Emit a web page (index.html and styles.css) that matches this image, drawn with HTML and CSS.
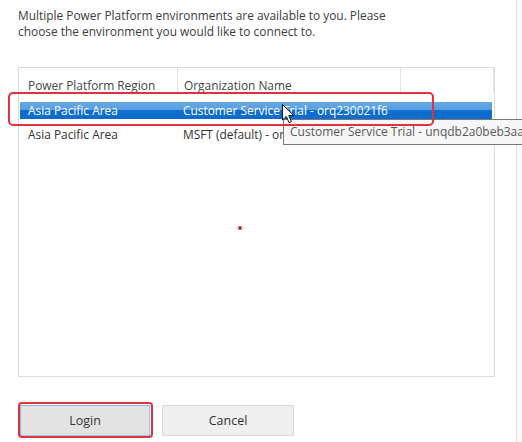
FILE: index.html
```html
<!DOCTYPE html>
<html>
<head>
<meta charset="utf-8">
<link rel="stylesheet" href="styles.css">
</head>
<body>
<div class="screen">
  <div class="main">
    <p class="intro">Multiple Power Platform environments are available to you. Please<br>choose the environment you would like to connect to.</p>
    <div class="list">
      <div class="head">
        <div class="h1">Power Platform Region</div>
        <div class="h2">Organization Name</div>
        <div class="h3"></div>
      </div>
      <div class="row sel">
        <div class="c1">Asia Pacific Area</div>
        <div class="c2">Customer Service Trial - orq230021f6</div>
      </div>
      <div class="row">
        <div class="c1">Asia Pacific Area</div>
        <div class="c2 clip">MSFT (default) - orgdefault01</div>
      </div>
    </div>
    <div class="buttons">
      <div class="btn login">Login</div>
      <div class="btn cancel">Cancel</div>
    </div>
  </div>
  <div class="edge"></div>

  <div class="tooltip">Customer Service Trial - unqdb2a0beb3aa</div>
  <div class="mark mark-row"></div>
  <div class="mark mark-btn"></div>
  <div class="dot"></div>
  <svg class="cursor" width="13" height="20" viewBox="0 0 13 20">
    <path d="M0.5 0.5 L0.5 16 L4.3 12.4 L7 18.6 L9.4 17.6 L6.8 11.6 L11.8 11.6 Z" fill="#fff" stroke="#111" stroke-width="1" stroke-linejoin="round"/>
  </svg>
</div>
</body>
</html>
```
FILE: styles.css
```css
html, body {
  margin: 0;
  padding: 0;
  background: #fff;
}
.screen {
  position: relative;
  width: 522px;
  height: 442px;
  overflow: hidden;
  display: flex;
  font-family: "Open Sans", "Noto Sans", sans-serif;
  font-size: 11.9px;
  color: #3a3a3a;
}
.main {
  width: 516px;
  padding: 7px 0 0 18px;
  box-sizing: border-box;
  display: flex;
  flex-direction: column;
}
.edge {
  flex: 1;
  border-left: 1px solid #e4e4e4;
  background: #fafafa;
}
.intro {
  margin: 0;
  line-height: 16px;
  color: #3c3c3c;
}
.list {
  margin-top: 28px;
  width: 477px;
  height: 310px;
  box-sizing: border-box;
  border: 1px solid #dcdcdc;
  display: flex;
  flex-direction: column;
}
.head {
  display: flex;
  height: 24px;
  color: #444;
}
.head > div {
  box-sizing: border-box;
  height: 24px;
  padding-top: 9px;
  line-height: 16px;
  border-right: 1px solid #e3e3e3;
  white-space: nowrap;
}
.h1 { width: 159px; padding-left: 9px; }
.h2 { width: 223px; padding-left: 6px; }
.h3 { width: 93px; }
.row {
  display: flex;
  height: 17px;
  margin: 7px 2px 0 1px;
  line-height: 17px;
  white-space: nowrap;
  color: #333;
}
.row.sel {
  margin-top: 10px;
  color: #fff;
  background: linear-gradient(#66a7e6 0, #5a9fe2 45%, #0f6fd1 45%, #0b6bcd 100%);
}
.c1 { width: 158px; padding-left: 8px; box-sizing: border-box; }
.c2 { padding-left: 5px; }
.c2.clip { width: 112px; overflow: hidden; }
.buttons {
  display: flex;
  gap: 12px;
  margin-top: 28px;
  padding-left: 2px;
}
.btn {
  height: 31px;
  box-sizing: border-box;
  display: flex;
  align-items: center;
  justify-content: center;
  font-size: 12.5px;
  color: #333;
}
.login {
  width: 130px;
  background: #e3e3e3;
  border: 1px solid #86b8ea;
  border-right-color: #9cc4ee;
  border-bottom-color: #9cc4ee;
}
.cancel {
  width: 132px;
  background: #efefef;
  border: 1px solid #dadada;
}
.tooltip {
  position: absolute;
  left: 283px;
  top: 119px;
  width: 260px;
  height: 26px;
  box-sizing: border-box;
  border: 1px solid #7a7a7a;
  background: #f7f7f7;
  color: #575757;
  padding-left: 6px;
  line-height: 24px;
  white-space: nowrap;
  font-size: 12px;
}
.mark {
  position: absolute;
  border: 2px solid #e2333c;
  border-radius: 5px;
  box-sizing: border-box;
}
.mark-row {
  left: 8px;
  top: 92px;
  width: 426px;
  height: 34px;
}
.mark-btn {
  left: 18px;
  top: 402px;
  width: 135px;
  height: 36px;
  border-radius: 4px;
}
.dot {
  position: absolute;
  left: 238px;
  top: 226px;
  width: 4px;
  height: 4px;
  border-radius: 50%;
  background: #e0242a;
}
.cursor {
  position: absolute;
  left: 282px;
  top: 104px;
}
```
